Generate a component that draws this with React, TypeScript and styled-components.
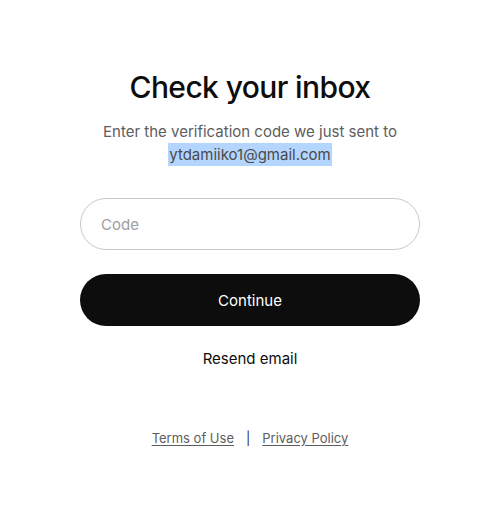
import styled, { createGlobalStyle } from "styled-components";

const GlobalStyle = createGlobalStyle`
  * {
    box-sizing: border-box;
  }
  body {
    margin: 0;
    background: #ffffff;
    font-family: Inter, "Noto Sans", sans-serif;
  }
`;

function App() {
  return (
    <>
      <GlobalStyle />
      <Page>
        <Card>
          <Title>Check your inbox</Title>
          <Subtitle>
            Enter the verification code we just sent to
            <br />
            <Email>ytdamiiko1@gmail.com</Email>
          </Subtitle>
          <Form>
            <CodeInput placeholder="Code" />
            <ContinueButton type="button">Continue</ContinueButton>
            <ResendButton type="button">Resend email</ResendButton>
          </Form>
          <Footer>
            <FooterLink href="#">Terms of Use</FooterLink>
            <Divider>|</Divider>
            <FooterLink href="#">Privacy Policy</FooterLink>
          </Footer>
        </Card>
      </Page>
    </>
  );
}

const Page = styled.div`
  width: 100%;
  min-height: 508px;
  display: flex;
  justify-content: center;
  padding: 68px 0 0 19px;
`;

const Card = styled.div`
  width: 340px;
  display: flex;
  flex-direction: column;
  align-items: center;
`;

const Title = styled.h1`
  margin: 0;
  font-size: 30px;
  font-weight: 500;
  line-height: 38px;
  color: #0d0d0d;
  letter-spacing: -0.6px;
`;

const Subtitle = styled.p`
  margin: 14px 0 0;
  font-size: 15px;
  line-height: 23px;
  color: #5d5d5d;
  text-align: center;
`;

const Email = styled.span`
  background: #b4d5fe;
  color: #4a4a4a;
  padding: 2px 1px;
`;

const Form = styled.div`
  width: 100%;
  display: flex;
  flex-direction: column;
  align-items: center;
  margin-top: 32px;
`;

const CodeInput = styled.input`
  width: 100%;
  height: 52px;
  border: 1px solid #c9c9c9;
  border-radius: 26px;
  padding: 0 20px;
  font-family: inherit;
  font-size: 15px;
  color: #0d0d0d;
  outline: none;
  &::placeholder {
    color: #9e9e9e;
  }
`;

const ContinueButton = styled.button`
  width: 100%;
  height: 52px;
  margin-top: 24px;
  border: none;
  border-radius: 26px;
  background: #0d0d0d;
  color: #ffffff;
  font-family: inherit;
  font-size: 15px;
  cursor: pointer;
`;

const ResendButton = styled.button`
  margin-top: 21px;
  border: none;
  background: none;
  padding: 0;
  font-family: inherit;
  font-size: 15px;
  line-height: 23px;
  color: #0d0d0d;
  cursor: pointer;
`;

const Footer = styled.div`
  display: flex;
  align-items: center;
  gap: 12px;
  margin-top: 60px;
  font-size: 13px;
  color: #5d5d5d;
`;

const FooterLink = styled.a`
  color: #5d5d5d;
  text-decoration: underline;
  text-underline-offset: 2px;
`;

const Divider = styled.span`
  color: #2d2d2d;
`;

export default App;
